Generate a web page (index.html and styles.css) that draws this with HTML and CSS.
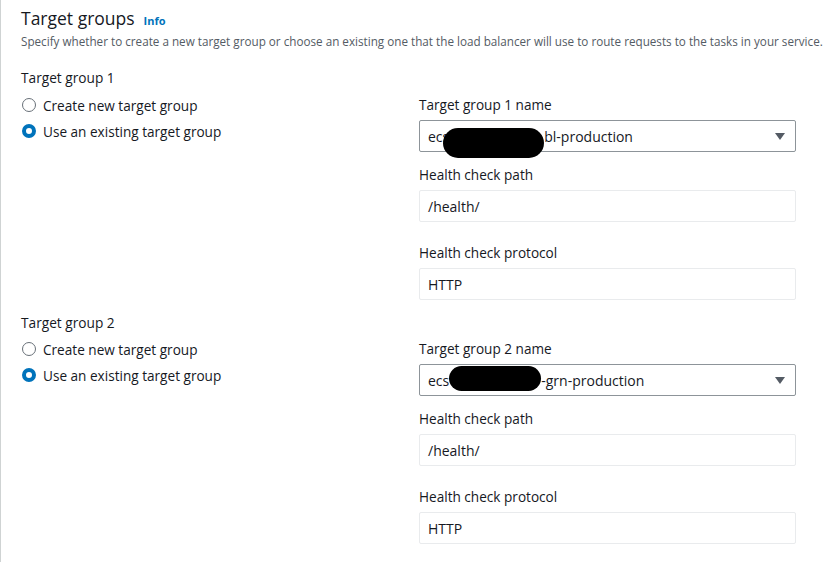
FILE: index.html
```html
<!DOCTYPE html>
<html lang="en">
<head>
<meta charset="utf-8">
<title>Target groups</title>
<link rel="stylesheet" href="styles.css">
</head>
<body>
<div class="page">
  <div class="header">
    <h2 class="title">Target groups <a class="info" href="#">Info</a></h2>
    <p class="desc">Specify whether to create a new target group or choose an existing one that the load balancer will use to route requests to the tasks in your service.</p>
  </div>

  <section class="group">
    <div class="group-title">Target group 1</div>
    <div class="grid">
      <div class="radios">
        <label class="radio"><span class="dot"></span>Create new target group</label>
        <label class="radio checked"><span class="dot"></span>Use an existing target group</label>
      </div>
      <div class="fields">
        <div class="field field-select">
          <div class="label">Target group 1 name</div>
          <div class="select">
            <span class="value">ecs<span class="hidden-part"></span>bl-production</span>
            <svg class="caret" width="10" height="7" viewBox="0 0 10 7"><path d="M0 0 H10 L5 7 Z" fill="#545b64"/></svg>
            <span class="redact redact-1"></span>
          </div>
        </div>
        <div class="field">
          <div class="label">Health check path</div>
          <div class="input">/health/</div>
        </div>
        <div class="field field-last">
          <div class="label">Health check protocol</div>
          <div class="input">HTTP</div>
        </div>
      </div>
    </div>
  </section>

  <section class="group group-2">
    <div class="group-title">Target group 2</div>
    <div class="grid grid-2">
      <div class="radios">
        <label class="radio"><span class="dot"></span>Create new target group</label>
        <label class="radio checked"><span class="dot"></span>Use an existing target group</label>
      </div>
      <div class="fields">
        <div class="field field-select">
          <div class="label">Target group 2 name</div>
          <div class="select">
            <span class="value">ecs<span class="hidden-part hp2"></span>-grn-production</span>
            <svg class="caret" width="10" height="7" viewBox="0 0 10 7"><path d="M0 0 H10 L5 7 Z" fill="#545b64"/></svg>
            <span class="redact redact-2"></span>
          </div>
        </div>
        <div class="field">
          <div class="label">Health check path</div>
          <div class="input">/health/</div>
        </div>
        <div class="field field-last">
          <div class="label">Health check protocol</div>
          <div class="input">HTTP</div>
        </div>
      </div>
    </div>
  </section>
</div>
</body>
</html>
```

FILE: styles.css
```css
* { box-sizing: border-box; }
html, body { margin: 0; padding: 0; background: #ffffff; }
body {
  font-family: "Open Sans", "Noto Sans", "Liberation Sans", sans-serif;
  color: #16191f;
  width: 827px;
  height: 562px;
  overflow: hidden;
}
.page {
  border-left: 1px solid #cfd3d3;
  padding: 0 31px 0 20px;
  height: 562px;
}
.header { padding-top: 7px; }
.title {
  margin: 0;
  display: flex;
  align-items: baseline;
  height: 22px;
  font-size: 17.5px;
  line-height: 22px;
  font-weight: 400;
  color: #16191f;
}
.info {
  font-size: 11px;
  font-weight: 700;
  color: #0073bb;
  text-decoration: none;
  margin-left: 9px;
}
.desc {
  margin: 4px 0 0;
  font-size: 11.7px;
  line-height: 16px;
  color: #545b64;
  white-space: nowrap;
}
.group { margin-top: 19px; }
.group-2 { margin-top: 13px; }
.group-title {
  font-size: 13.7px;
  line-height: 20px;
}
.grid {
  display: grid;
  grid-template-columns: 377px 377px;
  column-gap: 21px;
  margin-top: 7px;
}
.grid-2 { margin-top: 6px; }
.radios {
  display: flex;
  flex-direction: column;
  row-gap: 6px;
}
.radio {
  display: flex;
  align-items: center;
  height: 20px;
  font-size: 13.6px;
  gap: 7px;
  padding-left: 1px;
}
.dot {
  width: 14px;
  height: 14px;
  border-radius: 50%;
  border: 1.5px solid #687078;
  background: #fff;
  flex: none;
}
.radio.checked .dot {
  border: 4.5px solid #0073bb;
}
.fields { display: flex; flex-direction: column; }
.field { margin-bottom: 21px; }
.field-select { margin-bottom: 13px; }
.field-last { margin-bottom: 0; }
.label {
  font-size: 13.6px;
  line-height: 20px;
  color: #16191f;
}
.select, .input {
  margin-top: 5px;
  height: 32px;
  display: flex;
  align-items: center;
  padding: 0 10px 0 8px;
  font-size: 14px;
  border-radius: 2px;
}
.select {
  position: relative;
  border: 1px solid #8d9499;
  justify-content: space-between;
}
.input {
  border: 1px solid #e9ebed;
  color: #16191f;
}
.value { white-space: nowrap; }
.hidden-part {
  display: inline-block;
  width: 95px;
}
.hp2 { width: 92px; }
.caret { flex: none; margin-top: 1px; }
.redact {
  position: absolute;
  background: #000;
  border-radius: 15px;
}
.redact-1 { left: 23px; top: 7px; width: 101px; height: 30px; }
.redact-2 { left: 29px; top: 1px; width: 92px; height: 25px; border-radius: 13px; }
```
